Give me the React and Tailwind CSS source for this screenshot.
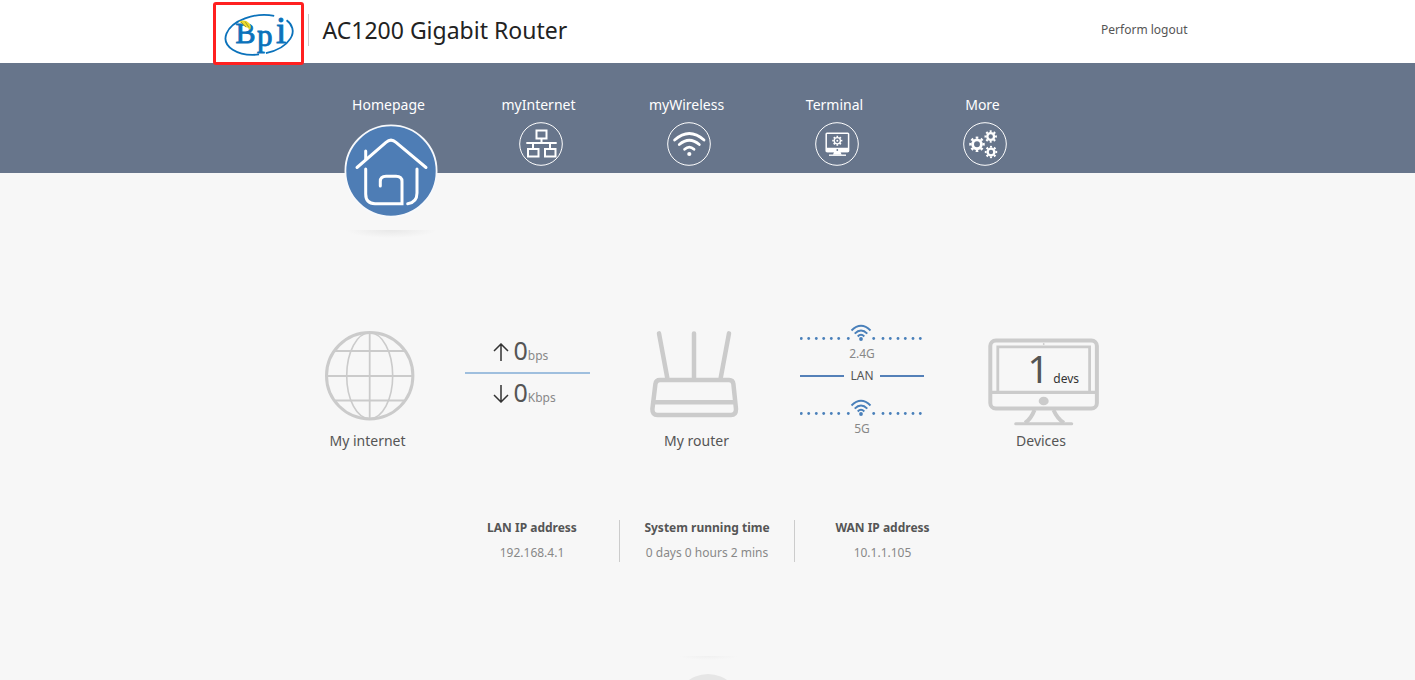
import React from "react";

function Logo() {
  return (
    <svg viewBox="0 0 85 57" className="block h-[57px] w-[85px]" role="img" aria-label="Bpi">
      <g transform="rotate(-9 42 30)" fill="none" stroke="#0b72bb" strokeWidth="1.8">
        <path d="M61 13.6 A33.5 19.5 0 1 0 40 49.4" />
        <path d="M47 49.2 A33.5 19.5 0 0 0 72.5 20" />
      </g>
      <g fill="#0b72bb" fontFamily="Liberation Serif, serif" stroke="#0b72bb" strokeWidth="0.9">
        <text x="19.5" y="38" fontSize="30">B</text>
        <text x="41" y="41" fontSize="31">p</text>
        <text x="60" y="38" fontSize="37">i</text>
      </g>
      <path d="M23 16.500 Q29 14 33 18 Q36 21 34 25 Q32 22 29 22 Q27 19 23 16.500Z" fill="#e9dc2c" />
      <path d="M25 17 l5 5 M29 16.500 l4 6" stroke="#857d2b" strokeWidth="0.7" />
    </svg>
  );
}

function HomeIcon() {
  return (
    <svg viewBox="0 0 94 94" className="block h-[94px] w-[94px]" aria-hidden="true">
      <circle cx="47" cy="47" r="45.6" fill="#4e7db5" stroke="#f7f9fc" strokeWidth="1.8" />
      <g fill="none" stroke="#fff" strokeWidth="3" strokeLinecap="round">
        <path d="M13 43.5 L42 18.3 Q47 14 52 18.3 L82 43.5" />
        <path d="M21.7 27V35" />
        <path d="M21.7 45V70Q21.7 79.5 31 79.7H58V57.5Q58 52.3 52 52.3H42Q36.3 52.3 36.3 57.5V62" />
        <path d="M73 45V69Q73 78.5 63.7 79.7" />
      </g>
    </svg>
  );
}

function RoundIcon({ children }) {
  return (
    <svg viewBox="0 0 44 44" className="block h-11 w-11" fill="none" stroke="#fff" aria-hidden="true">
      <circle cx="22" cy="22" r="21.3" strokeWidth="1" />
      {children}
    </svg>
  );
}

function Gear({ x, y, r, w, tooth }) {
  return (
    <g>
      <circle cx={x} cy={y} r={r} strokeWidth={w} />
      <circle
        cx={x}
        cy={y}
        r={r + w / 2 + tooth / 2 - 0.3}
        strokeWidth={tooth}
        pathLength="16"
        strokeDasharray="1 1"
        strokeDashoffset="0.5"
      />
    </g>
  );
}

function NetworkIcon() {
  return (
    <RoundIcon>
      <g strokeWidth="2">
        <path d="M17.5 8.5h10v8h-10z" />
        <path d="M7.3 21h30.4" />
        <path d="M22.5 17v4M14 21v5M31 21v5" />
        <path d="M9 27h10.5v7.5H9zM26 27h10.5v7.5H26z" />
      </g>
    </RoundIcon>
  );
}

function WirelessIcon() {
  return (
    <RoundIcon>
      <g strokeWidth="2.8" strokeLinecap="round">
        <path d="M7.6 18Q22.3 5 37 18" />
        <path d="M12.3 22.5Q22.3 14 32.3 22.5" />
        <path d="M17.6 27.2Q22.3 23 27 27.2" />
      </g>
      <circle cx="22.3" cy="32" r="2.1" fill="#fff" stroke="none" />
    </RoundIcon>
  );
}

function TerminalIcon() {
  return (
    <RoundIcon>
      <rect x="11.2" y="11.2" width="22.4" height="18.4" rx="0.8" strokeWidth="1.5" />
      <path d="M11 25.7h23v3q0 1.5-1.5 1.5h-20Q11 30.2 11 28.7z" fill="#fff" stroke="none" />
      <circle cx="22.3" cy="28" r="0.9" fill="#67758b" stroke="none" />
      <path d="M19 30h6.6l1 2.7h-8.6z" fill="#fff" stroke="none" />
      <path d="M14 33.2h17" strokeWidth="1.4" />
      <Gear x={22.3} y={18.7} r={3.1} w={1.3} tooth={1.6} />
      <circle cx="22.3" cy="18.7" r="1" fill="#fff" stroke="none" />
    </RoundIcon>
  );
}

function MoreIcon() {
  return (
    <RoundIcon>
      <Gear x={14} y={22.3} r={4.4} w={2.9} tooth={2.2} />
      <Gear x={27.7} y={14.5} r={3.4} w={2.4} tooth={1.9} />
      <Gear x={28} y={30} r={3.4} w={2.4} tooth={1.9} />
    </RoundIcon>
  );
}

function GlobeIcon() {
  return (
    <svg viewBox="0 0 90 90" className="block h-[90px] w-[90px]" fill="none" stroke="#cbcbcb" aria-hidden="true">
      <circle cx="44.7" cy="44.7" r="43.2" strokeWidth="3" />
      <ellipse cx="44.7" cy="44.7" rx="23" ry="43" strokeWidth="1.6" />
      <path d="M44.7 2v86M2 45h86M10 20h69.5M10 69.5h69.5" strokeWidth="1.8" />
    </svg>
  );
}

function RouterIcon() {
  return (
    <svg viewBox="0 0 90 88" className="block h-[88px] w-[90px]" fill="none" stroke="#cbcbcb" strokeLinecap="round" aria-hidden="true">
      <g strokeWidth="4.5">
        <path d="M9 3.4L17.3 48M44 3.400V48M79 3.4L70.7 48" />
        <path d="M10 50H79Q83 50 83.4 54L86 79Q86 85 81 85H7.5Q2.2 85 2.4 79L5.4 54Q6 50 10 50Z" />
        <path d="M5 72.3H84" />
      </g>
    </svg>
  );
}

function MonitorIcon() {
  return (
    <svg viewBox="0 0 111 88" className="block h-[88px] w-[111px]" fill="none" stroke="#cbcbcb" aria-hidden="true">
      <rect x="2.3" y="2.5" width="106.6" height="68" rx="5.5" strokeWidth="4" />
      <path d="M2 54.3H109" strokeWidth="3.2" />
      <path d="M9.8 54V8.8H101.6V54" strokeWidth="2.8" />
      <ellipse cx="55.7" cy="63" rx="5" ry="4.3" fill="#cbcbcb" stroke="none" />
      <circle cx="55.7" cy="6" r="0.9" fill="#cbcbcb" stroke="none" />
      <path d="M46.5 72Q43 81 37 85M65.500 72Q69.5 81 76 85" strokeWidth="4" />
      <path d="M27.7 85.7H83.7" strokeWidth="3" strokeLinecap="round" />
    </svg>
  );
}

function Arrow({ down }) {
  return (
    <svg viewBox="0 0 16 18" className="h-[18px] w-4 shrink-0" fill="none" stroke="#333" strokeWidth="1.5" aria-hidden="true">
      {down ? <path d="M8 0V17M1 10L8 17L15 10" /> : <path d="M8 18V1M1 8L8 1L15 8" />}
    </svg>
  );
}

const dots = [1.3, 8.7, 16.3, 23.7, 31.3, 38.7, 48.3, 73.7, 83, 90.3, 98, 105.3, 113, 120.3];

function SignalLine() {
  return (
    <svg viewBox="0 0 125 18" className="block h-[18px] w-[125px]" fill="none" stroke="#4a80ba" aria-hidden="true">
      {dots.map((x) => (
        <circle key={x} cx={x} cy="15.5" r="1.4" fill="#4a80ba" stroke="none" />
      ))}
      <g strokeWidth="1.9">
        <path d="M51.5 7.5Q61 -2 70.5 7.5" />
        <path d="M54.7 10.7Q61 4.3 67.3 10.7" />
        <path d="M57.7 13.5Q61 10 64.3 13.5" />
      </g>
      <circle cx="61" cy="16" r="1.9" fill="#4a80ba" stroke="none" />
    </svg>
  );
}

const items = [
  { label: "myInternet", Icon: NetworkIcon },
  { label: "myWireless", Icon: WirelessIcon },
  { label: "Terminal", Icon: TerminalIcon },
  { label: "More", Icon: MoreIcon },
];

const stats = [
  { label: "LAN IP address", value: "192.168.4.1" },
  { label: "System running time", value: "0 days 0 hours 2 mins" },
  { label: "WAN IP address", value: "10.1.1.105" },
];

function Speed({ down, value, unit }) {
  return (
    <div className="flex h-10 items-center pl-7">
      <Arrow down={down} />
      <p className="ml-[5px] leading-10 text-[#888]">
        <span className="text-[25px] text-[#555]">{value}</span>
        <span className="text-xs">{unit}</span>
      </p>
    </div>
  );
}

export default function App() {
  return (
    <div className="h-screen overflow-hidden bg-[#f7f7f7] font-['Noto_Sans','Open_Sans',sans-serif] text-[#555]">
      <header className="bg-white">
        <div className="mx-auto flex h-[63px] max-w-[990px] items-center justify-between pr-[15px] pb-1">
          <div className="flex items-center">
            <div className="z-10 mt-1 -mb-1 rounded-[3px] border-3 border-[#ff2020] bg-white">
              <Logo />
            </div>
            <div className="ml-1 h-8 border-l border-[#ccc]" />
            <h1 className="ml-3.5 text-[23px] leading-8 text-[#222]">AC1200 Gigabit Router</h1>
          </div>
          <a href="#logout" className="text-xs">Perform logout</a>
        </div>
      </header>

      <nav className="bg-[#67758b]">
        <ul className="mx-auto flex h-[110px] max-w-[990px] pt-8 pl-[104px] text-sm text-white">
          <li className="mr-0.5 w-[148px]">
            <a href="#home" className="flex flex-col items-center">
              <span className="pr-1">Homepage</span>
              <span className="mt-[9px]"><HomeIcon /></span>
              <span className="mt-3 h-2 w-[92px] bg-[radial-gradient(ellipse_at_top,#e8e8e8,#f7f7f7_70%)]" />
            </a>
          </li>
          {items.map(({ label, Icon }) => (
            <li key={label} className="w-[148px]">
              <a href={"#" + label} className="flex flex-col items-center">
                <span className="pr-1">{label}</span>
                <span className="mt-[7px]"><Icon /></span>
              </a>
            </li>
          ))}
        </ul>
      </nav>

      <main>
        <section className="mx-auto flex max-w-[990px] pt-[150px] pl-28 text-sm">
          <figure className="w-[90px] pt-2">
            <GlobeIcon />
            <figcaption className="mt-2 pr-1 text-center leading-6">My internet</figcaption>
          </figure>

          <div className="ml-[50px] w-[125px] pt-[9px]">
            <Speed value="0" unit="bps" />
            <div className="h-0.5 bg-[#9fbfde]" />
            <Speed down value="0" unit="Kbps" />
          </div>

          <figure className="ml-[60px] w-[90px] pt-[7px]">
            <RouterIcon />
            <figcaption className="mt-[11px] pl-1 text-center leading-6">My router</figcaption>
          </figure>

          <div className="ml-[60px] w-[125px] text-center text-xs">
            <SignalLine />
            <p className="mt-[5px] leading-4 text-[#888]">2.4G</p>
            <div className="my-1.5 flex items-center justify-between leading-4">
              <span className="h-0.5 w-11 bg-[#5480b8]" />
              LAN
              <span className="h-0.5 w-11 bg-[#5480b8]" />
            </div>
            <div className="mt-3.5">
              <SignalLine />
            </div>
            <p className="mt-[5px] leading-4 text-[#888]">5G</p>
          </div>

          <figure className="ml-[63px] w-[111px] pt-[15px]">
            <div className="relative">
              <MonitorIcon />
              <p className="absolute inset-x-0 top-1.5 pl-10 leading-[48px]">
                <span className="text-[38px]">1</span>
                <span className="ml-1 text-xs text-[#333]">devs</span>
              </p>
            </div>
            <figcaption className="mt-[3px] pr-1 text-center leading-6">Devices</figcaption>
          </figure>
        </section>

        <dl className="mt-[67px] flex justify-center text-center text-xs">
          {stats.map(({ label, value }) => (
            <div key={label} className="w-[175px] border-r border-[#ccc] leading-4 last:border-r-0">
              <dt className="font-bold">{label}</dt>
              <dd className="mt-[9px] pb-px text-[#888]">{value}</dd>
            </div>
          ))}
        </dl>

        <div className="mt-[94px] flex flex-col items-center">
          <div className="h-1 w-[60px] bg-[radial-gradient(ellipse_at_top,#f0f0f0,#f7f7f7_70%)]" />
          <button type="button" aria-label="Show more" className="mt-3.5 h-[66px] w-[66px] rounded-full bg-[#e6e6e6]" />
        </div>
      </main>
    </div>
  );
}
